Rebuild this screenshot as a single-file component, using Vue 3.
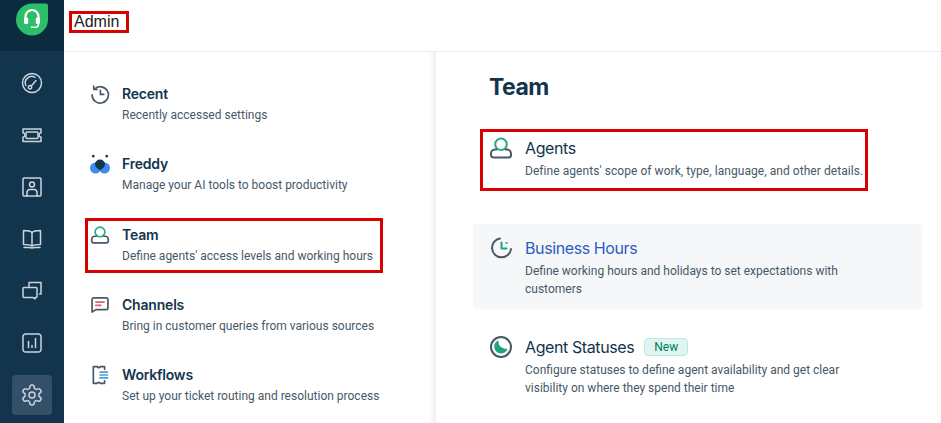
<template>
  <div class="page">
    <aside class="rail">
      <div class="rail-top">
        <svg class="logo" width="34" height="36" viewBox="0 0 34 36">
          <path d="M17 3.5H31a2 2 0 0 1 2 2V19.5A16 16 0 0 1 1 19.5A16 16 0 0 1 17 3.5z" fill="#2dbe6c" />
          <path d="M10.5 19v-2.500a6.500 6.500 0 0 1 13 0V19" fill="none" stroke="#fff" stroke-width="2.200" />
          <rect x="9" y="17.500" width="4.200" height="6.500" rx="1.500" fill="#fff" />
          <rect x="20.800" y="17.500" width="4.200" height="6.500" rx="1.500" fill="#fff" />
          <path d="M23.5 24c0 2-1.500 3.300-3.500 3.300h-4" fill="none" stroke="#fff" stroke-width="1.500" />
        </svg>
      </div>
      <div class="rail-list">
        <div v-for="item in railItems" :key="item.name" class="rail-item">
          <div class="rail-icon" :class="{ active: item.active }">
            <svg width="24" height="24" viewBox="0 0 24 24" fill="none" stroke="#c9d5de" stroke-width="1.500" stroke-linejoin="round" stroke-linecap="round">
              <path v-for="d in item.paths" :key="d" :d="d" />
            </svg>
          </div>
        </div>
      </div>
    </aside>

    <div class="main">
      <header class="topbar">
        <span class="page-title">Admin</span>
      </header>

      <div class="content">
        <nav class="sections">
          <div
            v-for="section in sections"
            :key="section.title"
            class="section"
            :class="{ marked: section.marked }"
          >
            <svg class="section-icon" width="20" height="20" viewBox="0 0 24 24" fill="none" stroke-width="2" stroke-linecap="round" stroke-linejoin="round">
              <path
                v-for="p in section.icon"
                :key="p.d"
                :d="p.d"
                :stroke="p.fill ? 'none' : p.color"
                :fill="p.fill ? p.color : 'none'"
              />
            </svg>
            <div>
              <div class="section-title">{{ section.title }}</div>
              <div class="section-desc">{{ section.desc }}</div>
            </div>
          </div>
        </nav>

        <section class="detail">
          <h1 class="detail-title">Team</h1>
          <div
            v-for="entry in entries"
            :key="entry.title"
            class="entry"
            :class="{ marked: entry.marked, hover: entry.hover }"
          >
            <svg class="entry-icon" width="24" height="24" viewBox="0 0 24 24" fill="none" stroke-width="2" stroke-linecap="round" stroke-linejoin="round">
              <path
                v-for="p in entry.icon"
                :key="p.d"
                :d="p.d"
                :stroke="p.fill ? 'none' : p.color"
                :fill="p.fill ? p.color : 'none'"
              />
            </svg>
            <div>
              <div class="entry-head">
                <span class="entry-title">{{ entry.title }}</span>
                <span v-if="entry.isNew" class="badge">New</span>
              </div>
              <div class="entry-desc">{{ entry.desc }}</div>
            </div>
          </div>
        </section>
      </div>
    </div>
  </div>
</template>

<script setup>
const GREY = '#475867'
const GREEN = '#2aa882'

const gear = 'M12.22 2h-.44a2 2 0 0 0-2 2v.18a2 2 0 0 1-1 1.73l-.43.25a2 2 0 0 1-2 0l-.15-.08a2 2 0 0 0-2.73.73l-.22.38a2 2 0 0 0 .73 2.73l.15.1a2 2 0 0 1 1 1.72v.51a2 2 0 0 1-1 1.74l-.15.09a2 2 0 0 0-.73 2.73l.22.38a2 2 0 0 0 2.73.73l.15-.08a2 2 0 0 1 2 0l.43.25a2 2 0 0 1 1 1.73V20a2 2 0 0 0 2 2h.44a2 2 0 0 0 2-2v-.18a2 2 0 0 1 1-1.73l.43-.25a2 2 0 0 1 2 0l.15.08a2 2 0 0 0 2.73-.73l.22-.39a2 2 0 0 0-.73-2.73l-.15-.08a2 2 0 0 1-1-1.74v-.5a2 2 0 0 1 1-1.74l.15-.09a2 2 0 0 0 .73-2.73l-.22-.38a2 2 0 0 0-2.73-.73l-.15.08a2 2 0 0 1-2 0l-.43-.25a2 2 0 0 1-1-1.73V4a2 2 0 0 0-2-2z'

const railItems = [
  {
    name: 'dashboard',
    paths: [
      'M12 2.5a9.5 9.5 0 1 0 0 19a9.5 9.5 0 1 0 0-19z',
      'M5.8 14.5a6.5 6.5 0 0 1 9.2-8.2',
      'M10 14.5a1.7 1.7 0 1 0 0 3.4a1.7 1.7 0 1 0 0-3.4z',
      'M11.3 15l4.7-5.5',
    ],
  },
  {
    name: 'tickets',
    paths: [
      'M3 6h18v4a2 2 0 0 0 0 4v4.5H3V14a2 2 0 0 0 0-4z',
      'M7 9h10a1 1 0 0 1 1 1v4.5a1 1 0 0 1-1 1H7a1 1 0 0 1-1-1V10a1 1 0 0 1 1-1z',
    ],
  },
  {
    name: 'contacts',
    paths: [
      'M4 3h16a1 1 0 0 1 1 1v16a1 1 0 0 1-1 1H4a1 1 0 0 1-1-1V4a1 1 0 0 1 1-1z',
      'M12 7a2.5 2.5 0 1 0 0 5a2.5 2.5 0 1 0 0-5z',
      'M7 21v-3.5a3 3 0 0 1 3-3h4a3 3 0 0 1 3 3V21',
    ],
  },
  {
    name: 'solutions',
    paths: [
      'M12 5.5C10.5 4 8 3.5 3.5 3.5v14c4.5 0 7 .3 8.5 1.5c1.5-1.2 4-1.5 8.5-1.5v-14C16 3.5 13.5 4 12 5.5z',
      'M12 5.5V19',
      'M4 20.5h5l3 .5l3-.5h5',
    ],
  },
  {
    name: 'conversations',
    paths: [
      'M9 8V3.5h12v11.5h-1.5',
      'M4 8.5h12a1 1 0 0 1 1 1v8a1 1 0 0 1-1 1h-1v1.5l-2-1.5H4a1 1 0 0 1-1-1v-8a1 1 0 0 1 1-1z',
    ],
  },
  {
    name: 'analytics',
    paths: [
      'M5.5 3h13A2.5 2.5 0 0 1 21 5.5v13a2.5 2.5 0 0 1-2.5 2.5h-13A2.5 2.5 0 0 1 3 18.5v-13A2.5 2.5 0 0 1 5.5 3z',
      'M8.5 16.5v-6',
      'M12 16.5v-2',
      'M15.5 16.5v-9',
    ],
  },
  {
    name: 'admin',
    active: true,
    paths: [gear, 'M12 9a3 3 0 1 0 0 6a3 3 0 1 0 0-6z'],
  },
]

const personIcon = [
  { d: 'M12 2.5a5.8 5.8 0 1 0 0 11.6a5.8 5.8 0 1 0 0-11.6z', color: GREEN },
  { d: 'M7.5 13.5H6a4.2 4.2 0 0 0-4 4.2V19a2.5 2.5 0 0 0 2.5 2.5h15A2.5 2.5 0 0 0 22 19v-1.3a4.2 4.2 0 0 0-4-4.2h-1.5', color: GREY },
]

const sections = [
  {
    title: 'Recent',
    desc: 'Recently accessed settings',
    icon: [
      { d: 'M5.5 6A9.8 9.8 0 1 1 2.5 13', color: GREY },
      { d: 'M4.5 2.5V6.5h4', color: GREY },
      { d: 'M12.5 7.5v5h4', color: GREY },
    ],
  },
  {
    title: 'Freddy',
    desc: 'Manage your AI tools to boost productivity',
    icon: [
      { d: 'M6.6 10.2a6.6 6.6 0 1 0 0 13.2a6.6 6.6 0 1 0 0-13.2z', color: '#3d8cf0', fill: true },
      { d: 'M17.4 10.2a6.6 6.6 0 1 0 0 13.2a6.6 6.6 0 1 0 0-13.2z', color: '#3d8cf0', fill: true },
      { d: 'M12 6.5a6 6 0 0 1 6 6c0 3-3 5-6 7c-3-2-6-4-6-7a6 6 0 0 1 6-6z', color: '#12344d', fill: true },
      { d: 'M4 1a1.6 1.6 0 1 0 0 3.2a1.6 1.6 0 1 0 0-3.2z', color: '#12344d', fill: true },
      { d: 'M20 1a1.6 1.6 0 1 0 0 3.2a1.6 1.6 0 1 0 0-3.2z', color: '#12344d', fill: true },
    ],
  },
  {
    title: 'Team',
    desc: "Define agents' access levels and working hours",
    marked: true,
    icon: personIcon,
  },
  {
    title: 'Channels',
    desc: 'Bring in customer queries from various sources',
    icon: [
      { d: 'M4.5 3.5h15A2 2 0 0 1 21.5 5.5v10a2 2 0 0 1-2 2H7l-4.5 3V5.5a2 2 0 0 1 2-2z', color: GREY },
      { d: 'M7 8.5h10', color: '#e0616a' },
      { d: 'M7 12.5h6', color: '#e0616a' },
    ],
  },
  {
    title: 'Workflows',
    desc: 'Set up your ticket routing and resolution process',
    icon: [
      { d: 'M17.5 5V2H12c0 1.7-3 1.7-3 0H4v20h5c0-1.7 3-1.7 3 0h5.5v-3', color: GREY },
      { d: 'M12 8.5h9M12 12h9M12 15.5h9', color: '#4d9fd0' },
    ],
  },
]

const entries = [
  {
    title: 'Agents',
    desc: "Define agents' scope of work, type, language, and other details.",
    marked: true,
    icon: personIcon,
  },
  {
    title: 'Business Hours',
    desc: 'Define working hours and holidays to set expectations with customers',
    hover: true,
    icon: [
      { d: 'M11 2.5A9.5 9.5 0 1 0 22 13', color: GREY },
      { d: 'M12.5 6.5v6h5', color: '#1fa67f' },
      { d: 'M17.5 7h.1', color: '#1fa67f' },
    ],
  },
  {
    title: 'Agent Statuses',
    desc: 'Configure statuses to define agent availability and get clear visibility on where they spend their time',
    isNew: true,
    icon: [
      { d: 'M12 2a10 10 0 1 0 0 20a10 10 0 1 0 0-20z', color: GREY },
      { d: 'M9.5 5.5c-.5 4.5 2 8 9 8.5c-1 2.8-3.5 4.5-6.5 4.5a6.8 6.8 0 0 1-6.8-6.8c0-3 1.8-5.5 4.3-6.2z', color: '#1fa67f', fill: true },
    ],
  },
]
</script>

<style scoped>
.page {
  display: flex;
  width: 941px;
  height: 423px;
  overflow: hidden;
  background: #fff;
  font-family: Inter, "Noto Sans", sans-serif;
  color: #12344d;
}

.rail {
  flex: 0 0 64px;
  background: #12344d;
}

.rail-top {
  height: 51px;
  background: #0c2b40;
  display: flex;
  justify-content: center;
}

.logo {
  display: block;
}

.rail-list {
  padding-top: 6px;
}

.rail-item {
  height: 52px;
  display: flex;
  align-items: center;
  justify-content: center;
}

.rail-icon {
  width: 40px;
  height: 40px;
  border-radius: 4px;
  display: flex;
  align-items: center;
  justify-content: center;
}

.rail-icon.active {
  background: #345069;
}

.main {
  flex: 1;
  display: flex;
  flex-direction: column;
  min-width: 0;
}

.topbar {
  height: 40px;
  border-bottom: 1px solid #ebeff3;
  padding: 11px 0 0 8px;
}

.page-title {
  display: inline-block;
  padding: 0 7px 0 2px;
  height: 16px;
  line-height: 16px;
  font-family: "Liberation Sans", Arial, sans-serif;
  font-size: 16px;
  color: #222;
  outline: 3px solid #d90000;
}

.content {
  flex: 1;
  display: flex;
  min-height: 0;
}

.sections {
  flex: 0 0 372px;
  box-sizing: border-box;
  padding: 28px 0 0 26px;
  display: flex;
  flex-direction: column;
  gap: 21px;
  background: linear-gradient(to right, #fff calc(100% - 7px), #ebeff6);
}

.section {
  width: 292px;
  height: 49px;
  box-sizing: border-box;
  margin-left: -2px;
  padding: 4px 0 0 2px;
  display: flex;
  gap: 12px;
  flex-shrink: 0;
}

.section.marked {
  margin-top: 1px;
}

.marked {
  outline: 3px solid #d90000;
}

.section-icon {
  flex-shrink: 0;
}

.section-title {
  font-size: 14px;
  font-weight: 600;
  line-height: 20px;
  letter-spacing: -0.2px;
  color: #12344d;
}

.section-desc {
  margin-top: 2px;
  font-family: Roboto, Inter, sans-serif;
  font-size: 12px;
  line-height: 18px;
  color: #475867;
  white-space: nowrap;
}

.detail {
  flex: 1;
  padding: 20px 19px 0 37px;
  min-width: 0;
}

.detail-title {
  margin: 0 0 36px 16px;
  font-size: 23px;
  font-weight: 700;
  line-height: 30px;
  letter-spacing: -0.5px;
  color: #12344d;
}

.entry {
  display: flex;
  gap: 12px;
  padding: 14px 0 11px 16px;
  border-radius: 4px;
}

.entry.marked {
  width: 382px;
  box-sizing: border-box;
  margin: -6px 0 36px 10px;
  padding: 6px 0 8px 6px;
  border-radius: 0;
}

.entry.hover {
  background: #f5f7f9;
  margin-bottom: 14px;
}

.entry-icon {
  flex-shrink: 0;
  margin-top: -2px;
}

.entry-head {
  display: flex;
  align-items: center;
  gap: 10px;
  height: 20px;
}

.entry-title {
  font-size: 16px;
  line-height: 20px;
  letter-spacing: -0.4px;
  color: #12344d;
}

.entry.hover .entry-title {
  color: #2c5cc5;
}

.badge {
  height: 18px;
  line-height: 16px;
  padding: 0 9px;
  font-family: Roboto, Inter, sans-serif;
  font-size: 12px;
  color: #00795b;
  background: #e0f5f1;
  border: 1px solid #bfe8dd;
  border-radius: 4px;
  box-sizing: border-box;
}

.entry-desc {
  margin-top: 4px;
  max-width: 345px;
  font-family: Roboto, Inter, sans-serif;
  font-size: 12px;
  line-height: 18px;
  color: #475867;
}

.entry.marked .entry-desc {
  max-width: none;
  white-space: nowrap;
  letter-spacing: 0.06px;
}
</style>
